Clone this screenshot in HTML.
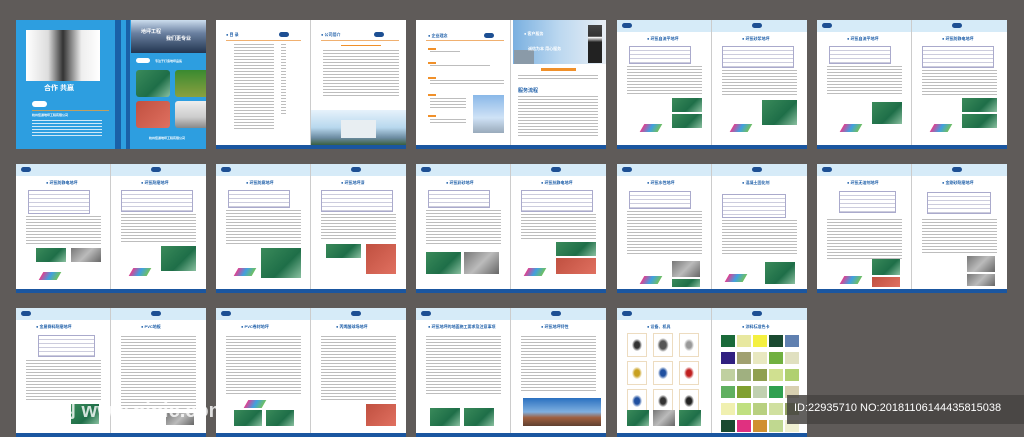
<!DOCTYPE html>
<html><head><meta charset="utf-8"><style>
body{margin:0;width:1024px;height:424px;background:#5f5b59;position:relative;overflow:hidden;font-family:"Liberation Sans","Noto Sans CJK SC",sans-serif}
.sp{position:absolute;width:190px;height:129px;background:#fff;overflow:hidden}
.sp .fold{position:absolute;left:94px;top:0;width:1px;height:100%;background:#ccc}
.hd{position:absolute;left:0;top:0;width:190px;height:12px;background:#d6ebf8}
.lg{position:absolute;top:3px;width:10px;height:5px;border-radius:3px;background:#1d4f93}
.bb{position:absolute;left:0;bottom:0;width:100%;height:4px;background:#1a56a0}
.t{position:absolute;font-size:4px;color:#1d5ea8;font-weight:bold;white-space:nowrap}
.ln{position:absolute;background:repeating-linear-gradient(#bdbdbd 0 1px,transparent 1px 3px)}
.or{position:absolute;width:8px;height:2px;background:#f0902a}
.tb{position:absolute;border:1px solid #aac;background:repeating-linear-gradient(#fff 0 3px,#ccd 3px 4px)}
.im{position:absolute}
.g{background:linear-gradient(135deg,#3a8a5a,#1e6e48 60%,#8ac0a0)}
.gr{background:linear-gradient(135deg,#777,#bbb 50%,#666)}
.rd{background:linear-gradient(135deg,#c05040,#e07060)}
.st{position:absolute;width:18px;height:8px;background:linear-gradient(90deg,#e04090,#40a0e0,#70c060);transform:skewX(-30deg)}
.wm{position:absolute;color:#fff;white-space:nowrap}
</style></head><body>

<div class="sp" style="left:16px;top:20px;background:#2d9ee0">
 <div class="im" style="left:10px;top:10px;width:74px;height:51px;background:linear-gradient(90deg,#fff,#ddd 30%,#333 50%,#eee 75%,#fff)"></div>
 <div class="t" style="left:28px;top:63px;font-size:7px;color:#fff">合作 共赢</div>
 <div class="im" style="left:16px;top:81px;width:15px;height:6px;border-radius:3px;background:#fff"></div>
 <div class="im" style="left:16px;top:90px;width:77px;height:1px;background:#c0a060"></div>
 <div class="t" style="left:16px;top:93px;color:#fff;font-size:3px">杭州佳通地坪工程有限公司</div>
 <div class="ln" style="left:16px;top:100px;width:70px;height:18px;background:repeating-linear-gradient(#cfe8f8 0 1px,transparent 1px 3px)"></div>
 <div class="im" style="left:99px;top:0;width:6px;height:129px;background:#1a60a8"></div>
 <div class="im" style="left:110px;top:0;width:4px;height:129px;background:#1a60a8"></div>
 <div class="im" style="left:115px;top:0;width:75px;height:33px;background:linear-gradient(#cde 0,#6a80a0 40%,#223550)"></div>
 <div class="t" style="left:125px;top:8px;color:#fff;font-size:5px">地坪工程</div>
 <div class="t" style="left:150px;top:15px;color:#fff;font-size:5px">我们更专业</div>
 <div class="im" style="left:120px;top:38px;width:14px;height:5px;border-radius:3px;background:#fff"></div>
 <div class="t" style="left:139px;top:39px;color:#fff;font-size:3px">专注于打造地坪品质</div>
 <div class="im g" style="left:120px;top:50px;width:34px;height:27px;border-radius:3px"></div>
 <div class="im" style="left:159px;top:50px;width:34px;height:27px;border-radius:3px;background:linear-gradient(#3a8a30,#8aa040)"></div>
 <div class="im rd" style="left:120px;top:81px;width:34px;height:27px;border-radius:3px"></div>
 <div class="im" style="left:159px;top:81px;width:34px;height:27px;border-radius:3px;background:linear-gradient(#eee,#ccc 60%,#888)"></div>
 <div class="t" style="left:133px;top:116px;color:#fff;font-size:3px">杭州佳通地坪工程有限公司</div>
</div>

<div class="sp" style="left:216px;top:20px">
 <div class="fold"></div>
 <div class="t" style="left:10px;top:12px">● 目 录</div><div class="lg" style="left:63px;top:12px"></div>
 <div class="im" style="left:10px;top:20px;width:75px;height:1px;background:#f0b070"></div>
 <div class="ln" style="left:18px;top:24px;width:40px;height:85px"></div>
 <div class="ln" style="left:65px;top:24px;width:5px;height:70px"></div>
 <div class="t" style="left:105px;top:12px">● 公司简介</div><div class="lg" style="left:158px;top:12px"></div>
 <div class="im" style="left:105px;top:20px;width:78px;height:1px;background:#f0b070"></div>
 <div class="or" style="left:125px;top:25px;width:40px;height:1px"></div>
 <div class="ln" style="left:107px;top:30px;width:76px;height:48px"></div>
 <div class="im" style="left:95px;top:90px;width:95px;height:35px;background:linear-gradient(#e6f2fb,#b8d8ee 50%,#6a8aa0 80%,#3a6040)"></div>
 <div class="im" style="left:125px;top:100px;width:35px;height:18px;background:#e8eef2"></div>
 <div class="bb"></div>
</div>

<div class="sp" style="left:416px;top:20px">
 <div class="fold"></div>
 <div class="t" style="left:12px;top:13px">● 企业理念</div><div class="lg" style="left:68px;top:13px"></div>
 <div class="im" style="left:10px;top:20px;width:78px;height:1px;background:#f0b070"></div>
 <div class="or" style="left:12px;top:28px"></div><div class="ln" style="left:14px;top:31px;width:30px;height:2px"></div>
 <div class="or" style="left:12px;top:42px"></div><div class="ln" style="left:14px;top:45px;width:60px;height:2px"></div>
 <div class="or" style="left:12px;top:57px"></div><div class="ln" style="left:14px;top:60px;width:74px;height:5px"></div>
 <div class="or" style="left:12px;top:74px"></div><div class="ln" style="left:14px;top:78px;width:36px;height:12px"></div>
 <div class="im" style="left:57px;top:75px;width:31px;height:38px;background:linear-gradient(#8ab8e8,#cfe2f6 60%,#9ab)"></div>
 <div class="or" style="left:12px;top:95px"></div><div class="ln" style="left:14px;top:99px;width:36px;height:5px"></div>
 <div class="im" style="left:97px;top:0;width:93px;height:44px;background:linear-gradient(90deg,#7ab0e0,#bcd8f0 50%,#e8eef4)"></div>
 <div class="im" style="left:98px;top:30px;width:20px;height:14px;background:#8a9aa8"></div>
 <div class="im" style="left:172px;top:5px;width:14px;height:38px;background:linear-gradient(#444 0,#333 30%,#fff 32%,#222 45%)"></div>
 <div class="t" style="left:108px;top:11px;color:#fff">● 客户服务</div>
 <div class="t" style="left:112px;top:26px;color:#fff">诚信为本 用心服务</div>
 <div class="or" style="left:125px;top:48px;width:35px;height:3px"></div>
 <div class="ln" style="left:102px;top:55px;width:80px;height:5px"></div>
 <div class="t" style="left:102px;top:67px;font-size:5px">服务流程</div>
 <div class="ln" style="left:102px;top:76px;width:80px;height:40px"></div>
 <div class="bb"></div>
</div>

<div class="sp" style="left:617px;top:20px"><div class="hd"></div><div class="lg" style="left:5px"></div><div class="lg" style="left:135px"></div><div class="fold"></div>
<div class="t" style="left:30px;top:16px">● 环氧自流平地坪</div><div class="tb" style="left:12px;top:26px;width:60px;height:16px"></div><div class="ln" style="left:10px;top:46px;width:75px;height:30px"></div><div class="im g" style="left:55px;top:78px;width:30px;height:14px"></div><div class="im g" style="left:55px;top:94px;width:30px;height:14px"></div><div class="st" style="left:25px;top:104px"></div>
<div class="t" style="left:125px;top:16px">● 环氧砂浆地坪</div><div class="tb" style="left:105px;top:26px;width:70px;height:20px"></div><div class="ln" style="left:105px;top:50px;width:75px;height:25px"></div><div class="im g" style="left:145px;top:80px;width:35px;height:25px"></div><div class="st" style="left:115px;top:104px"></div><div class="bb"></div></div>

<div class="sp" style="left:817px;top:20px"><div class="hd"></div><div class="lg" style="left:5px"></div><div class="lg" style="left:135px"></div><div class="fold"></div>
<div class="t" style="left:30px;top:16px">● 环氧自流平地坪</div><div class="tb" style="left:12px;top:26px;width:60px;height:16px"></div><div class="ln" style="left:10px;top:46px;width:75px;height:30px"></div><div class="im g" style="left:55px;top:82px;width:30px;height:22px"></div><div class="st" style="left:25px;top:104px"></div>
<div class="t" style="left:125px;top:16px">● 环氧防静电地坪</div><div class="tb" style="left:105px;top:26px;width:70px;height:20px"></div><div class="ln" style="left:105px;top:50px;width:75px;height:25px"></div><div class="im g" style="left:145px;top:78px;width:35px;height:14px"></div><div class="im g" style="left:145px;top:94px;width:35px;height:14px"></div><div class="st" style="left:115px;top:104px"></div><div class="bb"></div></div>

<div class="sp" style="left:16px;top:164px"><div class="hd"></div><div class="lg" style="left:5px"></div><div class="lg" style="left:135px"></div><div class="fold"></div>
<div class="t" style="left:30px;top:16px">● 环氧防静电地坪</div><div class="tb" style="left:12px;top:26px;width:60px;height:22px"></div><div class="ln" style="left:10px;top:52px;width:75px;height:30px"></div><div class="im g" style="left:20px;top:84px;width:30px;height:14px"></div><div class="im gr" style="left:55px;top:84px;width:30px;height:14px"></div><div class="st" style="left:25px;top:108px"></div>
<div class="t" style="left:125px;top:16px">● 环氧耐磨地坪</div><div class="tb" style="left:105px;top:26px;width:70px;height:20px"></div><div class="ln" style="left:105px;top:50px;width:75px;height:30px"></div><div class="im g" style="left:145px;top:82px;width:35px;height:25px"></div><div class="st" style="left:115px;top:104px"></div><div class="bb"></div></div>

<div class="sp" style="left:216px;top:164px"><div class="hd"></div><div class="lg" style="left:5px"></div><div class="lg" style="left:135px"></div><div class="fold"></div>
<div class="t" style="left:30px;top:16px">● 环氧防腐地坪</div><div class="tb" style="left:12px;top:26px;width:60px;height:16px"></div><div class="ln" style="left:10px;top:46px;width:75px;height:35px"></div><div class="im g" style="left:45px;top:84px;width:40px;height:30px"></div><div class="st" style="left:20px;top:104px"></div>
<div class="t" style="left:125px;top:16px">● 环氧地坪漆</div><div class="tb" style="left:105px;top:26px;width:70px;height:20px"></div><div class="ln" style="left:105px;top:50px;width:75px;height:25px"></div><div class="im g" style="left:110px;top:80px;width:35px;height:14px"></div><div class="im rd" style="left:150px;top:80px;width:30px;height:30px"></div><div class="bb"></div></div>

<div class="sp" style="left:416px;top:164px"><div class="hd"></div><div class="lg" style="left:5px"></div><div class="lg" style="left:135px"></div><div class="fold"></div>
<div class="t" style="left:30px;top:16px">● 环氧彩砂地坪</div><div class="tb" style="left:12px;top:26px;width:60px;height:16px"></div><div class="ln" style="left:10px;top:46px;width:75px;height:35px"></div><div class="im g" style="left:10px;top:88px;width:35px;height:22px"></div><div class="im gr" style="left:48px;top:88px;width:35px;height:22px"></div>
<div class="t" style="left:125px;top:16px">● 环氧抗静电地坪</div><div class="tb" style="left:105px;top:26px;width:70px;height:20px"></div><div class="ln" style="left:105px;top:50px;width:75px;height:25px"></div><div class="im g" style="left:140px;top:78px;width:40px;height:14px"></div><div class="im rd" style="left:140px;top:94px;width:40px;height:16px"></div><div class="st" style="left:110px;top:104px"></div><div class="bb"></div></div>

<div class="sp" style="left:617px;top:164px"><div class="hd"></div><div class="lg" style="left:5px"></div><div class="lg" style="left:135px"></div><div class="fold"></div>
<div class="t" style="left:30px;top:16px">● 环氧水性地坪</div><div class="tb" style="left:12px;top:27px;width:60px;height:16px"></div><div class="ln" style="left:10px;top:47px;width:75px;height:45px"></div><div class="im gr" style="left:55px;top:97px;width:28px;height:16px"></div><div class="im g" style="left:55px;top:115px;width:28px;height:8px"></div><div class="st" style="left:25px;top:112px"></div>
<div class="t" style="left:125px;top:16px">● 混凝土固化剂</div><div class="tb" style="left:105px;top:30px;width:62px;height:22px"></div><div class="ln" style="left:105px;top:56px;width:75px;height:35px"></div><div class="im g" style="left:148px;top:98px;width:30px;height:22px"></div><div class="st" style="left:110px;top:110px"></div><div class="bb"></div></div>

<div class="sp" style="left:817px;top:164px"><div class="hd"></div><div class="lg" style="left:5px"></div><div class="lg" style="left:135px"></div><div class="fold"></div>
<div class="t" style="left:30px;top:16px">● 环氧无溶剂地坪</div><div class="tb" style="left:22px;top:27px;width:55px;height:20px"></div><div class="ln" style="left:10px;top:55px;width:75px;height:40px"></div><div class="im g" style="left:55px;top:95px;width:28px;height:16px"></div><div class="im rd" style="left:55px;top:113px;width:28px;height:10px"></div><div class="st" style="left:25px;top:112px"></div>
<div class="t" style="left:125px;top:16px">● 金刚砂耐磨地坪</div><div class="tb" style="left:110px;top:28px;width:62px;height:20px"></div><div class="ln" style="left:105px;top:55px;width:75px;height:35px"></div><div class="im gr" style="left:150px;top:92px;width:28px;height:16px"></div><div class="im gr" style="left:150px;top:110px;width:28px;height:12px"></div><div class="bb"></div></div>

<div class="sp" style="left:16px;top:308px"><div class="hd"></div><div class="lg" style="left:5px"></div><div class="lg" style="left:135px"></div><div class="fold"></div>
<div class="t" style="left:20px;top:16px">● 金属骨料耐磨地坪</div><div class="tb" style="left:22px;top:27px;width:55px;height:20px"></div><div class="ln" style="left:10px;top:52px;width:75px;height:40px"></div><div class="im g" style="left:55px;top:96px;width:28px;height:20px"></div>
<div class="t" style="left:125px;top:16px">● PVC地板</div><div class="ln" style="left:105px;top:28px;width:75px;height:75px"></div><div class="im gr" style="left:150px;top:105px;width:28px;height:12px"></div><div class="bb"></div></div>

<div class="sp" style="left:216px;top:308px"><div class="hd"></div><div class="lg" style="left:5px"></div><div class="lg" style="left:135px"></div><div class="fold"></div>
<div class="t" style="left:25px;top:16px">● PVC卷材地坪</div><div class="ln" style="left:10px;top:28px;width:75px;height:60px"></div><div class="st" style="left:30px;top:92px"></div><div class="im g" style="left:18px;top:102px;width:28px;height:16px"></div><div class="im g" style="left:50px;top:102px;width:28px;height:16px"></div>
<div class="t" style="left:120px;top:16px">● 丙烯酸球场地坪</div><div class="ln" style="left:105px;top:28px;width:75px;height:65px"></div><div class="im rd" style="left:150px;top:96px;width:30px;height:22px"></div><div class="bb"></div></div>

<div class="sp" style="left:416px;top:308px"><div class="hd"></div><div class="lg" style="left:5px"></div><div class="lg" style="left:135px"></div><div class="fold"></div>
<div class="t" style="left:12px;top:16px">● 环氧地坪的地面施工要求及注意事项</div><div class="ln" style="left:10px;top:28px;width:75px;height:60px"></div><div class="im g" style="left:14px;top:100px;width:30px;height:18px"></div><div class="im g" style="left:48px;top:100px;width:30px;height:18px"></div>
<div class="t" style="left:125px;top:16px">● 环氧地坪特性</div><div class="ln" style="left:105px;top:28px;width:75px;height:55px"></div><div class="im" style="left:107px;top:90px;width:78px;height:28px;background:linear-gradient(#2a70c0,#80b0e0 50%,#a06040 70%,#604030)"></div><div class="bb"></div></div>

<div class="sp" style="left:617px;top:308px"><div class="hd"></div><div class="lg" style="left:5px"></div><div class="lg" style="left:135px"></div><div class="fold"></div>
<div class="t" style="left:30px;top:16px">● 设备、机具</div>
<div style="position:absolute;left:10px;top:25px;width:80px;display:grid;grid-template-columns:repeat(3,20px);gap:4px 6px">
<div style="height:22px;border:1px solid #eddcc0;background:radial-gradient(#333 20%,#fff 40%)"></div><div style="height:22px;border:1px solid #eddcc0;background:radial-gradient(#555 25%,#fff 45%)"></div><div style="height:22px;border:1px solid #eddcc0;background:radial-gradient(#999 20%,#fff 40%)"></div>
<div style="height:22px;border:1px solid #eddcc0;background:radial-gradient(#c8a020 20%,#fff 40%)"></div><div style="height:22px;border:1px solid #eddcc0;background:radial-gradient(#2050a0 20%,#fff 40%)"></div><div style="height:22px;border:1px solid #eddcc0;background:radial-gradient(#c02020 20%,#fff 40%)"></div>
<div style="height:22px;border:1px solid #eddcc0;background:radial-gradient(#2050a0 20%,#fff 40%)"></div><div style="height:22px;border:1px solid #eddcc0;background:radial-gradient(#333 20%,#fff 40%)"></div><div style="height:22px;border:1px solid #eddcc0;background:radial-gradient(#222 20%,#fff 40%)"></div></div>
<div class="im g" style="left:10px;top:102px;width:22px;height:16px"></div><div class="im gr" style="left:36px;top:102px;width:22px;height:16px"></div><div class="im g" style="left:62px;top:102px;width:22px;height:16px"></div>
<div class="t" style="left:125px;top:16px">● 涂料标准色卡</div>
<div style="position:absolute;left:104px;top:27px;display:grid;grid-template-columns:repeat(5,14px);gap:5px 2px">
<div style="height:12px;background:#1a6a3a"></div><div style="height:12px;background:#e8e8a0"></div><div style="height:12px;background:#f4f040"></div><div style="height:12px;background:#1a4a30"></div><div style="height:12px;background:#6080b0"></div>
<div style="height:12px;background:#302080"></div><div style="height:12px;background:#a0a070"></div><div style="height:12px;background:#e8e8c0"></div><div style="height:12px;background:#70b040"></div><div style="height:12px;background:#e0e0c0"></div>
<div style="height:12px;background:#c0d0a0"></div><div style="height:12px;background:#a0b080"></div><div style="height:12px;background:#90a050"></div><div style="height:12px;background:#d0e090"></div><div style="height:12px;background:#b0d070"></div>
<div style="height:12px;background:#60b060"></div><div style="height:12px;background:#80a030"></div><div style="height:12px;background:#c0d0b0"></div><div style="height:12px;background:#30a050"></div><div style="height:12px;background:#d8d0b0"></div>
<div style="height:12px;background:#f0f0b0"></div><div style="height:12px;background:#c0e080"></div><div style="height:12px;background:#b8d080"></div><div style="height:12px;background:#d0e0a0"></div><div style="height:12px;background:#90a060"></div>
<div style="height:12px;background:#1a4a30"></div><div style="height:12px;background:#e03080"></div><div style="height:12px;background:#d09030"></div><div style="height:12px;background:#c0d890"></div><div style="height:12px;background:#f0f0d0"></div>
<div style="height:12px;background:#a0d0f0"></div><div style="height:12px;background:#20a0e0"></div><div style="height:12px;background:#a0b080"></div><div style="height:12px;background:#209090"></div><div style="height:12px;background:#90b0c0"></div>
</div><div class="bb"></div></div>

<div class="wm" style="left:16px;top:394px;font-size:20px;color:rgba(255,255,255,.8);font-weight:bold">昵图网 www.nipic.com</div>
<div style="position:absolute;left:787px;top:395px;width:237px;height:29px;background:rgba(70,68,66,.85)"></div>
<div class="wm" style="left:794px;top:402px;font-size:11px">ID:22935710 NO:20181106144435815038</div>
</body></html>
